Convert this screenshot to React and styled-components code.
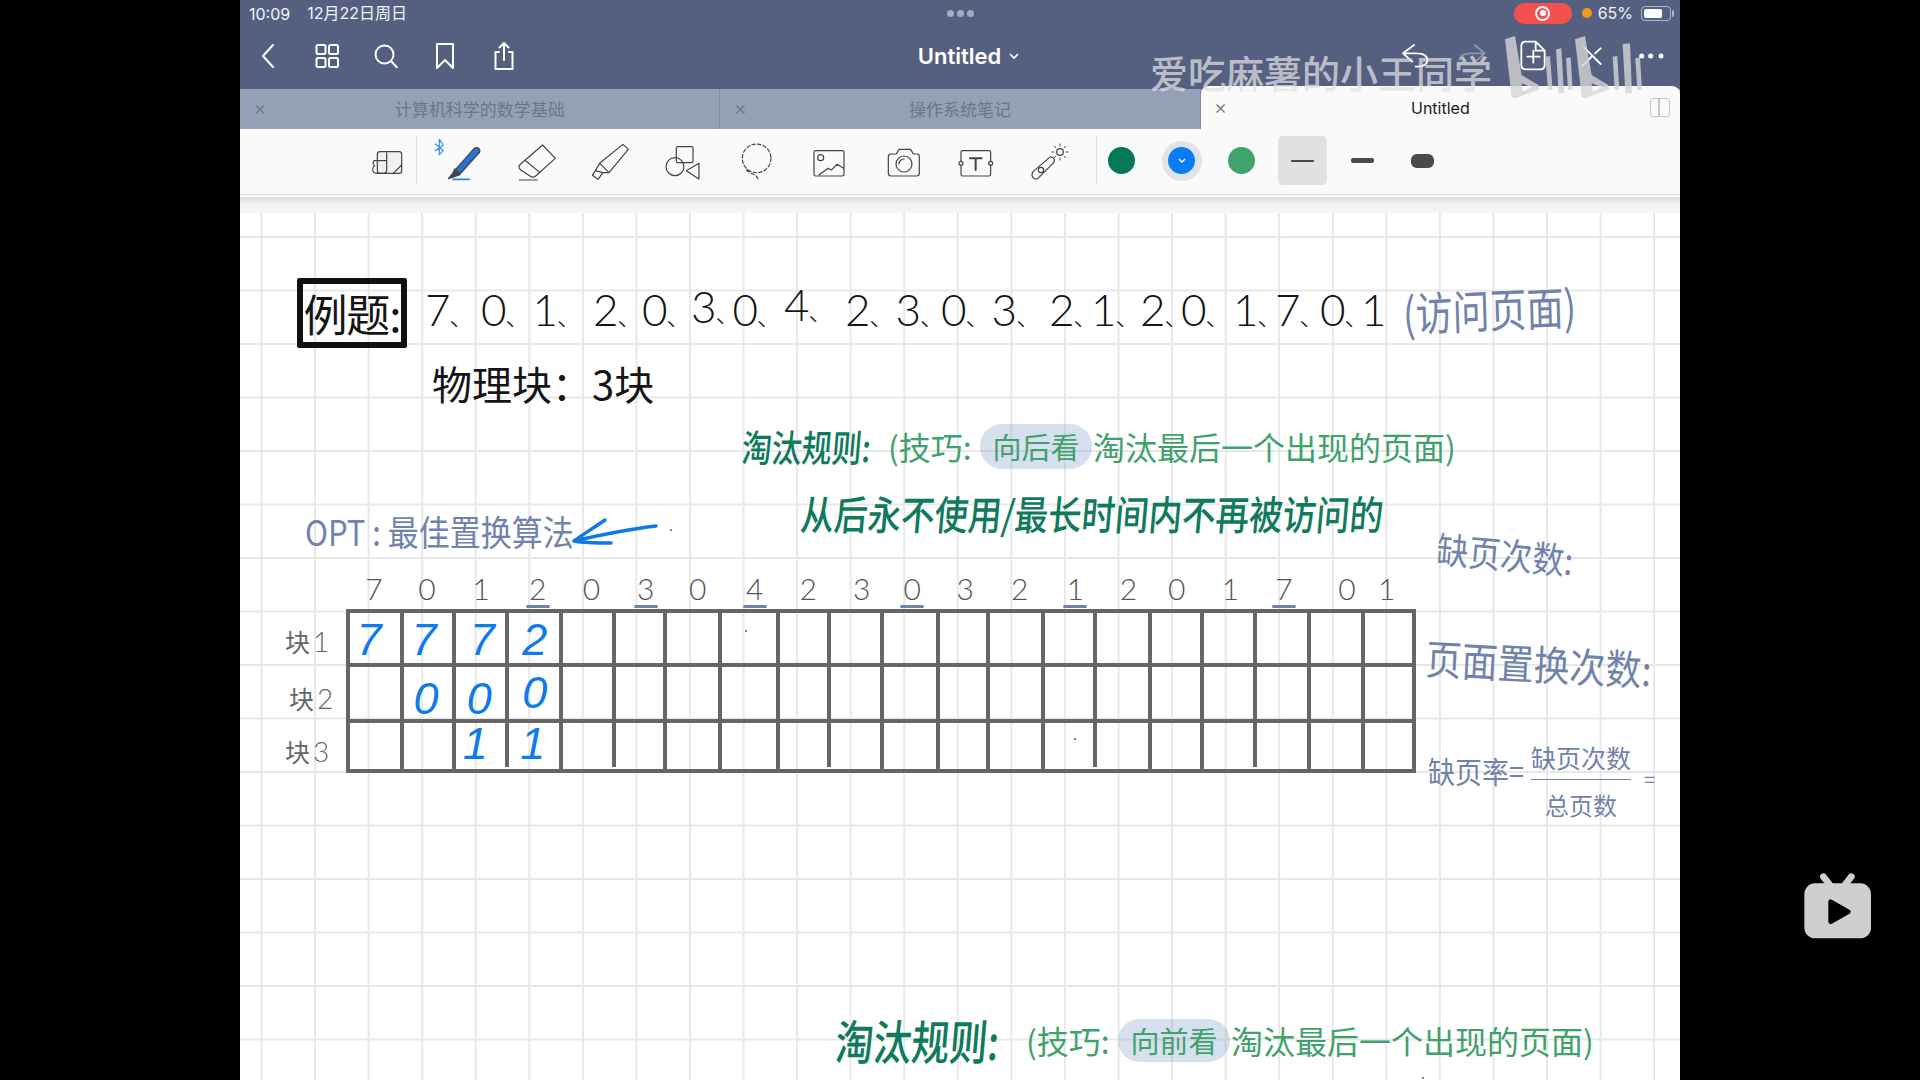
import React from "react";
import styled, { createGlobalStyle } from "styled-components";

const CJK = `"Noto Sans CJK SC", "Noto Sans", sans-serif`;
const UI = `Inter, "Noto Sans CJK SC", sans-serif`;
const DIGITS = `Lato, "Liberation Sans", sans-serif`;

const TONES = {
  black: "#151515",
  slate: "#7183aa",
  dark: "#0f7a5c",
  light: "#3fa26c",
  grey: "#666666",
};

const GlobalStyle = createGlobalStyle`
  html, body { margin: 0; padding: 0; background: #000; }
  * { box-sizing: border-box; }
`;

const Stage = styled.div`
  position: relative;
  width: 1920px;
  height: 1080px;
  overflow: hidden;
  background: #000;
  display: flex;
  justify-content: center;
`;
const Tablet = styled.div`
  width: 1440px;
  height: 1080px;
  display: flex;
  flex-direction: column;
  background: #fff;
`;
const Header = styled.header`
  height: 89px;
  flex: none;
  background: #556081;
  color: #fff;
  font-family: ${UI};
`;
const StatusBar = styled.div`
  height: 26px;
  padding: 0 9px;
  display: grid;
  grid-template-columns: 1fr auto 1fr;
  align-items: center;
  font-size: 16px;
  color: #f2f3f7;
`;
const StatusLeft = styled.div`
  display: flex;
  align-items: center;
  gap: 17px;
  line-height: 20px;
`;
const StatusTime = styled.span`
  position: relative;
  top: 1px;
`;
const StatusRight = styled.div`
  display: flex;
  justify-content: flex-end;
  align-items: center;
`;
const GripDots = styled.div`
  display: flex;
  gap: 3px;
`;
const GripDot = styled.i`
  width: 7px;
  height: 7px;
  border-radius: 50%;
  background: #a3abc2;
`;
const RecordPill = styled.div`
  width: 58px;
  height: 21px;
  border-radius: 10px;
  background: #f2514d;
  display: flex;
  align-items: center;
  justify-content: center;
`;
const RecordDot = styled.i`
  width: 15px;
  height: 15px;
  border-radius: 50%;
  border: 2px solid #fff;
  display: flex;
  align-items: center;
  justify-content: center;
  &::after {
    content: "";
    width: 6px;
    height: 6px;
    border-radius: 50%;
    background: #fff;
  }
`;
const OrangeDot = styled.i`
  width: 10px;
  height: 10px;
  margin: 0 6px 0 10px;
  border-radius: 50%;
  background: #f09a1c;
`;
const Battery = styled.div`
  position: relative;
  width: 30px;
  height: 15px;
  margin-left: 8px;
  padding: 2px;
  border: 1px solid #aeb5ca;
  border-radius: 4px;
  &::before {
    content: "";
    display: block;
    width: 18px;
    height: 100%;
    border-radius: 2px;
    background: #fff;
  }
  &::after {
    content: "";
    position: absolute;
    right: -4px;
    top: 3px;
    width: 2px;
    height: 7px;
    border-radius: 0 2px 2px 0;
    background: #aeb5ca;
  }
`;
const NavBar = styled.nav`
  height: 60px;
  padding: 0 9px 0 16px;
  display: grid;
  grid-template-columns: 1fr auto 1fr;
  align-items: center;
`;
const NavGroup = styled.div`
  display: flex;
  align-items: center;
  gap: 35px;
`;
const NavGroupRight = styled.div`
  display: flex;
  justify-content: flex-end;
  align-items: center;
  gap: 19px;
`;
const Title = styled.div`
  font-size: 22px;
  font-weight: 600;
  display: flex;
  align-items: center;
  gap: 8px;
  margin-left: 10px;
`;
const TabStrip = styled.div`
  height: 40px;
  flex: none;
  display: flex;
  background: #959fb7;
  position: relative;
`;
const Tab = styled.div`
  flex: 1;
  display: grid;
  grid-template-columns: 40px 1fr 40px;
  align-items: center;
  justify-items: center;
  padding-bottom: ${(p) => (p.$active ? "0" : "2px")};
  font-family: ${CJK};
  font-size: 17px;
  color: ${(p) => (p.$active ? "#1a1a1a" : "#6c7590")};
  background: ${(p) => (p.$active ? "#fafafa" : "transparent")};
  border-right: ${(p) => (p.$active ? "0" : "1px solid #7f8aa7")};
  border-radius: ${(p) => (p.$active ? "8px 8px 0 0" : "0")};
  margin-top: ${(p) => (p.$active ? "-3px" : "0")};
`;
const TabClose = styled.span`
  font-family: ${UI};
  font-size: 20px;
  font-weight: 300;
  margin-top: ${(p) => (p.$active ? "-2px" : "0")};
  color: ${(p) => (p.$active ? "#777" : "#6c7590")};
`;
const ActiveLabel = styled.span`
  font-family: ${UI};
  font-size: 16px;
`;
const SplitIcon = styled.i`
  width: 20px;
  height: 19px;
  border: 1.5px solid #c4c4c4;
  border-radius: 3px;
  position: relative;
  &::after {
    content: "";
    position: absolute;
    left: 7.5px;
    top: 0;
    bottom: 0;
    width: 1.5px;
    background: #c4c4c4;
  }
`;
const Toolbar = styled.div`
  height: 66px;
  flex: none;
  padding: 0 0 2px 132px;
  display: flex;
  align-items: center;
  background: #fafafa;
  border-bottom: 1px solid #d9d9d9;
`;
const DocSlot = styled.div`
  width: 34px;
  height: 50px;
`;
const ToolDivider = styled.i`
  width: 1px;
  height: 48px;
  background: #dcdcdc;
  margin: 0 ${(p) => p.$right}px 0 ${(p) => p.$left}px;
`;
const ToolSlot = styled.div`
  width: 73.3px;
  height: 50px;
`;
const ToolSvg = styled.svg`
  display: block;
  width: 100%;
  height: 100%;
  overflow: visible;
  fill: none;
  stroke: #444;
  stroke-width: 3.6;
  stroke-linecap: round;
  stroke-linejoin: round;
`;
const Swatches = styled.div`
  display: flex;
  gap: 20px;
`;
const SwatchSlot = styled.div`
  width: 40px;
  height: 40px;
  border-radius: 50%;
  display: flex;
  align-items: center;
  justify-content: center;
  background: ${(p) => (p.$selected ? "#e2e3e6" : "transparent")};
`;
const Swatch = styled.div`
  width: 27px;
  height: 27px;
  border-radius: 50%;
  background: ${(p) => p.$color};
  display: flex;
  align-items: center;
  justify-content: center;
`;
const Widths = styled.div`
  display: flex;
  gap: 11px;
  margin-left: 16px;
`;
const WidthSlot = styled.div`
  width: 49px;
  height: 49px;
  border-radius: 5px;
  display: flex;
  align-items: center;
  justify-content: center;
  background: ${(p) => (p.$selected ? "#e2e2e4" : "transparent")};
`;
const WidthMark = styled.i`
  width: ${(p) => p.$w}px;
  height: ${(p) => p.$h}px;
  border-radius: ${(p) => p.$h / 2.4}px;
  background: #4a4a4a;
`;
const ShadowBand = styled.div`
  height: 18px;
  flex: none;
  background: linear-gradient(#fff 0 2px, #dcdcdc 2px, #f1f1f1 50%, #f6f6f6);
`;
const Page = styled.main`
  position: relative;
  flex: 1;
  background-color: #fff;
  background-image: linear-gradient(to right, #e8e8e8 2px, transparent 2px),
    linear-gradient(to bottom, #e8e8e8 2px, transparent 2px);
  background-size: 53.57px 53.5px;
  background-position: 20.5px 0, 0 23px;
  font-family: ${CJK};
  color: #222;
`;
const Ink = styled.div`
  position: absolute;
  left: ${(p) => p.$x}px;
  top: ${(p) => p.$y}px;
  font-size: ${(p) => p.$size}px;
  line-height: 1;
  white-space: nowrap;
  font-weight: ${(p) => p.$weight || 400};
  color: ${(p) => TONES[p.$tone || "black"]};
  transform-origin: left center;
  transform: ${(p) => p.$shape || "none"};
`;
const ExampleBox = styled.div`
  position: absolute;
  left: 57px;
  top: 65px;
  width: 110px;
  height: 70px;
  border: 6px solid #111;
  border-radius: 2px;
  display: flex;
  align-items: center;
  justify-content: center;
  font-size: 44px;
  line-height: 1;
  letter-spacing: -1px;
  white-space: nowrap;
  color: #151515;
`;
const Sequence = styled.div`
  position: absolute;
  left: 185px;
  top: 74px;
  display: flex;
  font-family: ${DIGITS};
  font-size: 44px;
  font-weight: 300;
  line-height: 1;
  color: #151515;
`;
const SeqItem = styled.span`
  width: ${(p) => p.$w}px;
  flex: none;
  white-space: nowrap;
  transform: translateY(-${(p) => p.$up || 0}px);
`;
const SeqPause = styled.span`
  font-family: ${CJK};
  font-size: 24px;
  letter-spacing: -12px;
  margin-left: -1px;
`;
const Rule = styled.div`
  position: absolute;
  left: ${(p) => p.$x}px;
  top: ${(p) => p.$y}px;
  display: flex;
  align-items: center;
  height: 46px;
  white-space: nowrap;
  line-height: 1;
`;
const RuleHead = styled.span`
  color: ${TONES.dark};
  font-size: ${(p) => p.$size}px;
  font-weight: 500;
  width: ${(p) => p.$w}px;
  transform-origin: left center;
  transform: scaleY(1.25) skewX(-6deg);
`;
const RuleBody = styled.span`
  color: ${TONES.light};
  font-size: 32px;
  width: ${(p) => p.$w}px;
  flex: none;
`;
const Spot = styled.span`
  flex: none;
  width: 112px;
  height: ${(p) => p.$h}px;
  margin-right: 1px;
  border-radius: 22px;
  background: rgba(130, 160, 205, 0.32);
  color: ${TONES.light};
  display: flex;
  align-items: center;
  justify-content: center;
  font-size: 29px;
`;
const Arrow = styled.svg`
  position: absolute;
  left: 325px;
  top: 300px;
  width: 120px;
  height: 50px;
  fill: none;
  stroke: #1079ea;
  stroke-width: 3.5;
  stroke-linecap: round;
  stroke-linejoin: round;
`;
const Speck = styled.i`
  position: absolute;
  left: ${(p) => p.$x}px;
  top: ${(p) => p.$y}px;
  width: 2px;
  height: 2px;
  border-radius: 50%;
  background: #4a5a80;
`;
const TableBlock = styled.section`
  position: absolute;
  left: 45px;
  top: 359px;
  display: grid;
  grid-template-columns: 63px 54px 52px 52.6px 54.4px 53px 51.5px 54.5px 57.6px 51.4px 53.5px 55.5px 50.5px 54.5px 52.4px 54.2px 52.4px 53px 54px 54px 51.5px;
  grid-template-rows: 37px 58px 55.7px 50.3px;
`;
const HeadCell = styled.div`
  display: flex;
  align-items: flex-start;
  justify-content: center;
  font-family: ${DIGITS};
  font-size: 30px;
  font-weight: 300;
  line-height: 1;
  padding-top: 1px;
  color: #555;
  position: relative;
  transform: translateX(${(p) => p.$nudge}px);
  &::after {
    content: "";
    display: ${(p) => (p.$mark ? "block" : "none")};
    position: absolute;
    left: 50%;
    bottom: 1px;
    width: 24px;
    height: 3px;
    margin-left: -12px;
    border-radius: 2px;
    background: ${TONES.slate};
  }
`;
const RowLabel = styled.div`
  display: flex;
  align-items: center;
  font-size: 25px;
  color: #666;
  padding: 6px 0 0 ${(p) => p.$pad}px;
  gap: 3px;
`;
const LabelNum = styled.span`
  font-family: ${DIGITS};
  font-weight: 300;
  font-size: 28px;
`;
const Cell = styled.div`
  position: relative;
  display: flex;
  align-items: center;
  justify-content: center;
  border-bottom: 4px solid #666;
  border-top: ${(p) => (p.$top ? "4px solid #666" : "0")};
  &::after {
    content: "";
    position: absolute;
    right: -2px;
    top: ${(p) => (p.$top ? "-4px" : "0")};
    bottom: ${(p) => (p.$short ? "2px" : "-4px")};
    width: 4px;
    background: #666;
  }
  &::before {
    content: "";
    display: ${(p) => (p.$first ? "block" : "none")};
    position: absolute;
    left: -2px;
    top: ${(p) => (p.$top ? "-4px" : "0")};
    bottom: -4px;
    width: 4px;
    background: #666;
  }
`;
const CellDigit = styled.span`
  font-family: "Liberation Sans", sans-serif;
  font-size: 45px;
  font-style: italic;
  line-height: 1;
  color: #0f7aea;
  transform: translate(${(p) => p.$dx}px, ${(p) => p.$dy}px);
`;
const Fraction = styled.div`
  position: absolute;
  left: 1291px;
  top: 532px;
  width: 100px;
  display: flex;
  flex-direction: column;
  align-items: center;
  color: ${TONES.slate};
  line-height: 1;
`;
const FractionTop = styled.span`
  font-size: 25px;
  padding-bottom: 9px;
  width: 100%;
  text-align: center;
  border-bottom: 1.5px solid ${TONES.slate};
`;
const FractionBottom = styled.span`
  font-size: 24px;
  padding-top: 13px;
`;
const Watermark = styled.div`
  position: absolute;
  left: 1150px;
  top: 51px;
  font-family: ${CJK};
  font-size: 38px;
  font-weight: 500;
  line-height: 1.1;
  color: rgba(226, 226, 226, 0.74);
  white-space: nowrap;
`;
const Logo = styled.svg`
  position: absolute;
  left: 1380px;
  top: 30px;
  width: 300px;
  height: 110px;
  fill: rgba(212, 212, 212, 0.8);
`;
const TvBadge = styled.svg`
  position: absolute;
  left: 1780px;
  top: 860px;
  width: 120px;
  height: 100px;
`;

const SEQ = [
  ["7", 56], ["0", 51.5], ["1", 60.5], ["2", 49], ["0", 49], ["3", 41.5, 3], ["0", 51.5], ["4", 61, 5], ["2", 50.5],
  ["3", 45.5], ["0", 50.6], ["3", 57.4], ["2", 42], ["1", 49], ["2", 41], ["0", 52], ["1", 42], ["7", 45], ["0", 41], ["1", 30],
];
const SEQ_LAST = SEQ.length - 1;
const HEAD = "70120304230321201701".split("");
const HEAD_NUDGE = [-1, -1, 1, 4, 4, 6, 5, 6, 5, 6, 2, 2, 4, 6, 6, 1, 2, 2, 11, -2];
const MARKED = [3, 5, 7, 10, 13, 17];
const SHORT = [2, 4, 8, 13, 16];
const ROWS = [
  { num: "1", pad: 0, cells: [["7", -6, 1], ["7", -4, 1], ["7", 2, 1], ["2", 1, 1]] },
  { num: "2", pad: 4, cells: [null, ["0", -2, 6], ["0", -1, 6], ["0", 1, 0]] },
  { num: "3", pad: 0, cells: [null, null, ["1", -5, -2], ["1", -1, -2]] },
];
const COLS = Array.from({ length: 20 }, (_, i) => i);

const Svg24 = ({ w = 24, h = 24, children }) => (
  <svg width={w} height={h} viewBox={`0 0 ${w} ${h}`} fill="none" stroke="#fff" strokeWidth="2" strokeLinecap="round" strokeLinejoin="round" style={{ display: "block" }}>
    {children}
  </svg>
);
const CropIcon = ({ x, children, stroke = "#fff" }) => (
  <svg width="40" height="40" viewBox={`${x} 18 120 120`} fill="none" stroke={stroke} strokeWidth="5.5" strokeLinecap="round" strokeLinejoin="round" style={{ display: "block", overflow: "visible" }}>
    {children}
  </svg>
);

const App = () => (
  <Stage>
    <GlobalStyle />
    <Tablet>
      <Header>
        <StatusBar>
          <StatusLeft>
            <StatusTime>10:09</StatusTime>
            <span>12月22日周日</span>
          </StatusLeft>
          <GripDots>
            <GripDot />
            <GripDot />
            <GripDot />
          </GripDots>
          <StatusRight>
            <RecordPill>
              <RecordDot />
            </RecordPill>
            <OrangeDot />
            <span>65%</span>
            <Battery />
          </StatusRight>
        </StatusBar>
        <NavBar>
          <NavGroup>
            <Svg24>
              <path d="M17 1 L7 12 L17 23" />
            </Svg24>
            <Svg24>
              <rect x="1.5" y="1" width="9" height="9" rx="1.5" />
              <rect x="14" y="1" width="9" height="9" rx="1.5" />
              <rect x="1.5" y="14" width="9" height="9" rx="1.5" />
              <rect x="14" y="14" width="9" height="9" rx="1.5" />
            </Svg24>
            <Svg24>
              <circle cx="10.5" cy="10.5" r="9" />
              <path d="M17 17 L23 23.5" />
            </Svg24>
            <Svg24 h={28}>
              <path d="M4 2 H20 V26 L12 18 L4 26 Z" />
            </Svg24>
            <Svg24 h={30}>
              <path d="M7 11 H3.5 V28 H20.5 V11 H17 M12 19 V2 M7.5 6.5 L12 2 L16.5 6.5" />
            </Svg24>
          </NavGroup>
          <Title>
            Untitled
            <svg width="10" height="7" viewBox="0 0 10 7" fill="none" stroke="#fff" strokeWidth="1.6">
              <path d="M1 1 L5 5 L9 1" />
            </svg>
          </Title>
          <NavGroupRight>
            <CropIcon x={48}>
              <path d="M105 45 L72 70 L100 95 M75 70 H110 Q145 70 145 90 Q145 110 110 110" />
            </CropIcon>
            <CropIcon x={228} stroke="rgba(255,255,255,0.35)">
              <path d="M290 45 L320 70 L292 95 M318 70 H280 Q245 70 245 90" />
            </CropIcon>
            <CropIcon x={402}>
              <path d="M440 35 H470 L497 62 V105 Q497 118 484 118 H440 Q427 118 427 105 V48 Q427 35 440 35Z M470 35 V62 H497 M463 62 V98 M445 80 H482" />
            </CropIcon>
            <CropIcon x={579}>
              <path d="M615 52 L665 102 M610 108 L640 78 M648 70 L665 55" />
            </CropIcon>
            <CropIcon x={753}>
              <path d="M785 78 h0.1 M812 78 h0.1 M843 78 h0.1" strokeWidth="15" />
            </CropIcon>
          </NavGroupRight>
        </NavBar>
      </Header>
      <TabStrip>
        <Tab>
          <TabClose>×</TabClose>
          <span>计算机科学的数学基础</span>
        </Tab>
        <Tab>
          <TabClose>×</TabClose>
          <span>操作系统笔记</span>
        </Tab>
        <Tab $active>
          <TabClose $active>×</TabClose>
          <ActiveLabel>Untitled</ActiveLabel>
          <SplitIcon />
        </Tab>
      </TabStrip>
      <Toolbar>
        <DocSlot>
          <ToolSvg viewBox="36 18 102 150">
            <rect x="52" y="65" width="73" height="65" rx="8" fill="#f0f0f0" />
            <path d="M80 68 V120 Q80 130 70 130 H50 Q38 130 38 118 Q38 110 44 108 Q36 102 42 92 H80 M100 130 L125 105" />
          </ToolSvg>
        </DocSlot>
        <ToolDivider $left={10} $right={10} />
        <ToolSlot>
          <ToolSvg viewBox="199 18 220 150">
            <path d="M285 118 L340 56 Q350 48 358 60 Q358 68 352 72 L298 132 Z" fill="#2a72d0" />
            <path d="M283 116 L275 132 L263 146 L298 134" fill="#444" />
            <path d="M277 148 H326" stroke="#1e88f0" strokeWidth="5" />
            <path d="M225 42 L248 62 L236 74 V28 L248 45 L224 62" stroke="#2a8ff0" />
          </ToolSvg>
        </ToolSlot>
        <ToolSlot>
          <ToolSvg viewBox="420 18 220 150">
            <path d="M548 45 L586 85 L527 138 Q518 145 510 138 L482 120 Q472 110 482 102 Z M497 92 L540 128 M478 150 H532" />
          </ToolSvg>
        </ToolSlot>
        <ToolSlot>
          <ToolSvg viewBox="640 18 220 150">
            <path d="M787 43 L803 58 L745 128 L717 100 Z M717 100 L704 122 L695 136 L712 148 L727 128 L745 128 M704 122 L727 128" />
          </ToolSvg>
        </ToolSlot>
        <ToolSlot>
          <ToolSvg viewBox="859 18 220 150">
            <rect x="947" y="50" width="50" height="48" rx="4" />
            <circle cx="943" cy="110" r="27" />
            <path d="M1015 100 L977 122 L1015 147 Z" />
          </ToolSvg>
        </ToolSlot>
        <ToolSlot>
          <ToolSvg viewBox="0 18 220 150">
            <circle cx="110" cy="85" r="43" strokeDasharray="10 7" />
            <path d="M80 120 Q90 130 105 135 Q112 140 115 150" strokeDasharray="10 7" />
          </ToolSvg>
        </ToolSlot>
        <ToolSlot>
          <ToolSvg viewBox="220 18 220 150">
            <rect x="283" y="62" width="90" height="76" rx="5" />
            <circle cx="303" cy="83" r="9" />
            <path d="M298 135 L325 115 L335 120 L352 103 L372 115" />
          </ToolSvg>
        </ToolSlot>
        <ToolSlot>
          <ToolSvg viewBox="439 18 220 150">
            <path d="M511 72 H527 L535 58 H570 L578 72 H588 Q596 72 596 80 V130 Q596 138 588 138 H511 Q503 138 503 130 V80 Q503 72 511 72Z" />
            <circle cx="550" cy="102" r="24" />
            <path d="M535 102 a15 15 0 0 1 15 -15" />
          </ToolSvg>
        </ToolSlot>
        <ToolSlot>
          <ToolSvg viewBox="660 18 220 150">
            <rect x="723" y="62" width="89" height="76" rx="5" />
            <circle cx="723" cy="100" r="6" fill="#fafafa" />
            <circle cx="812" cy="100" r="6" fill="#fafafa" />
            <path d="M750 85 H785 M767 85 V120" strokeWidth="6" />
          </ToolSvg>
        </ToolSlot>
        <ToolSlot>
          <ToolSvg viewBox="880 18 220 150">
            <path d="M940 125 L990 82 Q998 78 1004 88 Q1006 95 1000 100 L955 145 Q948 150 940 143 Q934 134 940 125Z" />
            <circle cx="964" cy="120" r="8" />
            <circle cx="1021" cy="66" r="10" />
            <path d="M1021 42 V48 M1021 84 V90 M997 66 H1003 M1039 66 H1045 M1004 49 L1008 53 M1034 79 L1038 83 M1038 49 L1034 53 M1008 79 L1004 83" strokeWidth="3" />
          </ToolSvg>
        </ToolSlot>
        <ToolDivider $left={9} $right={5} />
        <Swatches>
          <SwatchSlot>
            <Swatch $color="#06785a" />
          </SwatchSlot>
          <SwatchSlot $selected>
            <Swatch $color="#0a7cf5">
              <svg width="8" height="6" viewBox="0 0 8 6" fill="none" stroke="#fff" strokeWidth="1.4">
                <path d="M1 1 L4 4 L7 1" />
              </svg>
            </Swatch>
          </SwatchSlot>
          <SwatchSlot>
            <Swatch $color="#3ea36c" />
          </SwatchSlot>
        </Swatches>
        <Widths>
          <WidthSlot $selected>
            <WidthMark $w={23} $h={2} />
          </WidthSlot>
          <WidthSlot>
            <WidthMark $w={23} $h={5} />
          </WidthSlot>
          <WidthSlot>
            <WidthMark $w={23} $h={14} />
          </WidthSlot>
        </Widths>
      </Toolbar>
      <ShadowBand />
      <Page>
        <ExampleBox>例题:</ExampleBox>
        <Sequence>
          {SEQ.map(([d, w, up], i) => (
            <SeqItem key={i} $w={w} $up={up}>
              {d}
              {i < SEQ_LAST && <SeqPause>、</SeqPause>}
            </SeqItem>
          ))}
        </Sequence>
        <Ink $x={1163} $y={81} $size={37} $tone="slate" $shape="scaleY(1.25) rotate(-2deg)">
          (访问页面)
        </Ink>
        <Ink $x={192} $y={150} $size={40}>
          物理块：3块
        </Ink>

        <Rule $x={502} $y={210}>
          <RuleHead $size={30} $w={146}>
            淘汰规则:
          </RuleHead>
          <RuleBody $w={92}>(技巧:</RuleBody>
          <Spot $h={45}>向后看</Spot>
          <RuleBody>淘汰最后一个出现的页面)</RuleBody>
        </Rule>
        <Ink $x={561} $y={283} $size={33.5} $tone="dark" $weight={500} $shape="scaleY(1.2) skewX(-6deg)">
          从后永不使用/最长时间内不再被访问的
        </Ink>

        <Ink $x={65} $y={302} $size={31} $tone="slate" $shape="scaleY(1.15)">
          OPT : 最佳置换算法
        </Ink>
        <Arrow viewBox="325 300 120 50">
          <path d="M334 328 C360 322 390 316 416 313 M365 307 C352 316 342 322 334 328 C345 330 358 330 371 330" />
        </Arrow>
        <Speck $x={430} $y={316} />
        <Speck $x={505} $y={417} />
        <Speck $x={834} $y={525} />
        <Speck $x={1182} $y={864} />

        <TableBlock>
          <div />
          {HEAD.map((d, i) => (
            <HeadCell key={i} $mark={MARKED.includes(i)} $nudge={HEAD_NUDGE[i]}>
              {d}
            </HeadCell>
          ))}
          {ROWS.map((row, r) => (
            <React.Fragment key={r}>
              <RowLabel $pad={row.pad}>
                块<LabelNum>{row.num}</LabelNum>
              </RowLabel>
              {COLS.map((c) => (
                <Cell key={c} $top={r === 0} $first={c === 0} $short={r === 2 && SHORT.includes(c)}>
                  {row.cells[c] && (
                    <CellDigit $dx={row.cells[c][1]} $dy={row.cells[c][2]}>
                      {row.cells[c][0]}
                    </CellDigit>
                  )}
                </Cell>
              ))}
            </React.Fragment>
          ))}
        </TableBlock>

        <Ink $x={1197} $y={318} $size={32} $tone="slate" $shape="rotate(5deg) scaleY(1.15)">
          缺页次数:
        </Ink>
        <Ink $x={1186} $y={425} $size={36} $tone="slate" $shape="rotate(3deg) scaleY(1.15)">
          页面置换次数:
        </Ink>
        <Ink $x={1188} $y={544} $size={27} $tone="slate" $shape="scaleY(1.1)">
          缺页率=
        </Ink>
        <Fraction>
          <FractionTop>缺页次数</FractionTop>
          <FractionBottom>总页数</FractionBottom>
        </Fraction>
        <Ink $x={1404} $y={556} $size={20} $tone="slate">
          =
        </Ink>

        <Rule $x={596} $y={804}>
          <RuleHead $size={38} $w={190}>
            淘汰规则:
          </RuleHead>
          <RuleBody $w={92}>(技巧:</RuleBody>
          <Spot $h={43}>向前看</Spot>
          <RuleBody>淘汰最后一个出现的页面)</RuleBody>
        </Rule>
      </Page>
    </Tablet>

    <Watermark>爱吃麻薯的小王同学</Watermark>
    <Logo viewBox="0 0 900 330">
      <path fillRule="evenodd" d="M375 28 L405 18 L425 135 L475 165 L478 178 L405 205 L395 200 Z M425 160 L428 185 L455 172 Z" />
      <path d="M496 80 L510 78 L518 180 L504 180 Z M528 58 L544 55 L552 190 L536 190 Z M558 85 L572 82 L578 180 L564 180 Z" />
      <path fillRule="evenodd" d="M585 28 L615 18 L635 135 L685 165 L688 178 L615 205 L605 200 Z M635 160 L638 185 L665 172 Z" />
      <path d="M698 80 L712 78 L718 180 L704 180 Z M728 42 L750 40 L756 190 L736 190 Z M766 85 L780 82 L786 180 L772 180 Z" />
    </Logo>
    <TvBadge viewBox="0 0 360 300">
      <path d="M130 50 L152 78 M214 50 L192 78" stroke="#cfcfcf" strokeWidth="20" strokeLinecap="round" />
      <rect x="73" y="70" width="200" height="165" rx="32" fill="#cfcfcf" />
      <path d="M152 125 L205 155 L152 185 Z" fill="#000" stroke="#000" strokeWidth="14" strokeLinejoin="round" />
    </TvBadge>
  </Stage>
);

export default App;
